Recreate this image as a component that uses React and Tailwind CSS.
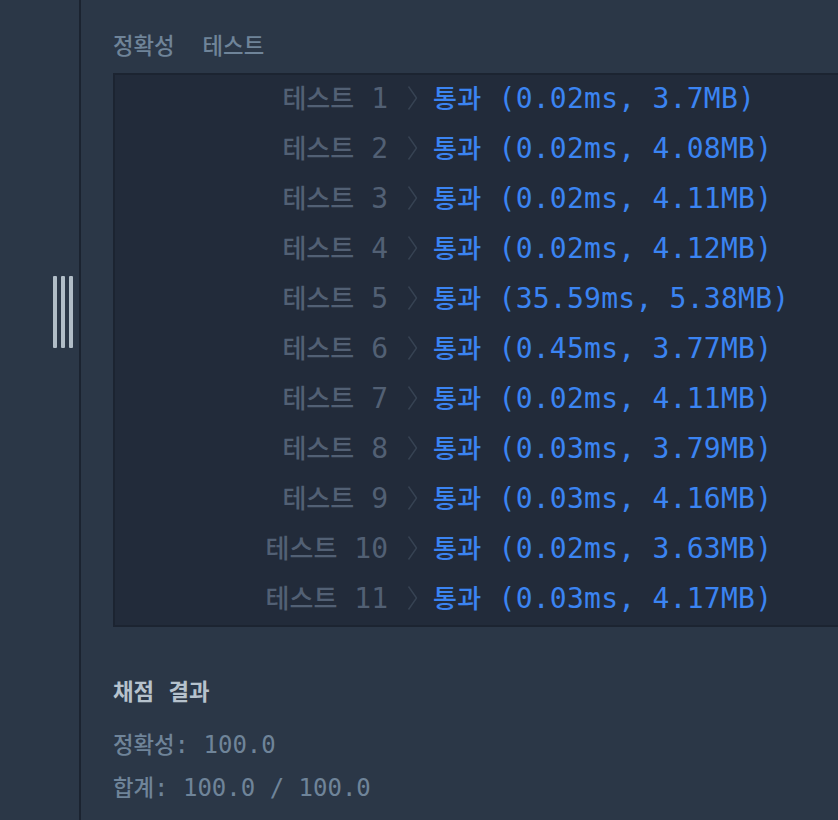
const tests = [
  { no: 1, time: '0.02ms', mem: '3.7MB' },
  { no: 2, time: '0.02ms', mem: '4.08MB' },
  { no: 3, time: '0.02ms', mem: '4.11MB' },
  { no: 4, time: '0.02ms', mem: '4.12MB' },
  { no: 5, time: '35.59ms', mem: '5.38MB' },
  { no: 6, time: '0.45ms', mem: '3.77MB' },
  { no: 7, time: '0.02ms', mem: '4.11MB' },
  { no: 8, time: '0.03ms', mem: '3.79MB' },
  { no: 9, time: '0.03ms', mem: '4.16MB' },
  { no: 10, time: '0.02ms', mem: '3.63MB' },
  { no: 11, time: '0.03ms', mem: '4.17MB' },
]

function Ko({ children, className = '' }) {
  return <span className={`font-['Noto_Sans_CJK_KR',sans-serif] text-[0.93em] ${className}`}>{children}</span>
}

function Chevron() {
  return (
    <svg width="11" height="26" viewBox="0 0 11 26" fill="none">
      <polyline points="1.5,1.5 9.5,13 1.5,24.5" stroke="#374353" strokeWidth="1.4" strokeLinejoin="round" />
    </svg>
  )
}

function TestRow({ test }) {
  return (
    <div className="flex h-[50px] items-center pb-1">
      <div className="w-[273px] text-right text-[#526074]">
        <Ko className="font-medium">테스트</Ko> {test.no}
      </div>
      <div className="flex w-[45px] justify-center pl-[3px]">
        <Chevron />
      </div>
      <div className="whitespace-pre tracking-[0.25px] text-[#3b84f2]">
        <Ko className="font-medium">통과</Ko> ({test.time}, {test.mem})
      </div>
    </div>
  )
}

function App() {
  return (
    <div className="flex h-[820px] overflow-hidden bg-[#2b3747] font-['DejaVu_Sans_Mono','Noto_Sans_CJK_KR',monospace]">
      <aside className="w-[81px] shrink-0 border-r-2 border-[#1b2330] pl-[53px] pt-[276px]">
        <div className="flex gap-1">
          <span className="h-[72px] w-1 rounded-[1px] bg-[#b1bdc7]" />
          <span className="h-[72px] w-1 rounded-[1px] bg-[#b1bdc7]" />
          <span className="h-[72px] w-1 rounded-[1px] bg-[#b1bdc7]" />
        </div>
      </aside>

      <main className="min-w-0 flex-1 pl-8 pt-[29px]">
        <h2 className="text-[24px] leading-[30px] text-[#6f8499]">
          <Ko className="font-medium">정확성</Ko>
          <Ko className="ml-[28px] font-medium">테스트</Ko>
        </h2>

        <div className="mt-[12px] w-[760px] border-2 border-r-0 border-[#1c2431] bg-[#222b3a] text-[28px] leading-[50px]">
          {tests.map((test) => (
            <TestRow key={test.no} test={test} />
          ))}
        </div>

        <h3 className="mt-[48px] whitespace-pre text-[24px] font-semibold leading-[30px] text-[#b6c2cd]">
          <Ko>채점</Ko> <Ko>결과</Ko>
        </h3>
        <p className="mt-[21px] whitespace-pre text-[24px] leading-[30px] text-[#6f8499]">
          <Ko className="font-medium">정확성</Ko>: 100.0
        </p>
        <p className="mt-[11px] whitespace-pre text-[24px] leading-[30px] text-[#6f8499]">
          <Ko className="font-medium">합계</Ko>: 100.0 / 100.0
        </p>
      </main>
    </div>
  )
}

export default App
